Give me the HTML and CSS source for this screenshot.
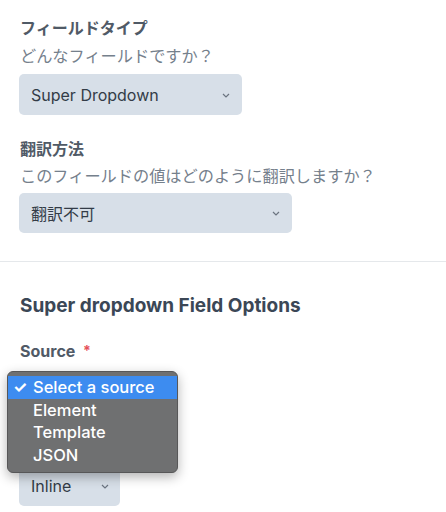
FILE: index.html
```html
<!DOCTYPE html>
<html lang="ja">
<head>
<meta charset="utf-8">
<link rel="stylesheet" href="styles.css">
</head>
<body>
<div class="top">
  <div class="field">
    <div class="label">フィールドタイプ</div>
    <div class="hint">どんなフィールドですか？</div>
    <div class="select w-type"><span>Super Dropdown</span><svg class="chev" width="8" height="5" viewBox="0 0 8 5"><polyline points="1,1 4,4 7,1" fill="none" stroke="#6b7480" stroke-width="1.2"/></svg></div>
  </div>
  <div class="field f2">
    <div class="label">翻訳方法</div>
    <div class="hint h2">このフィールドの値はどのように翻訳しますか？</div>
    <div class="select w-trans"><span>翻訳不可</span><svg class="chev" width="8" height="5" viewBox="0 0 8 5"><polyline points="1,1 4,4 7,1" fill="none" stroke="#6b7480" stroke-width="1.2"/></svg></div>
  </div>
</div>
<hr class="rule">
<div class="options">
  <h2 class="heading">Super dropdown Field Options</h2>
  <div class="field source">
    <div class="label">Source <span class="req">*</span></div>
    <div class="select w-source"><span></span><svg class="chev" width="8" height="5" viewBox="0 0 8 5"><polyline points="1,1 4,4 7,1" fill="none" stroke="#6b7480" stroke-width="1.2"/></svg></div>
    <div class="menu">
      <div class="item active"><span class="check">✓</span>Select a source</div>
      <div class="item">Element</div>
      <div class="item">Template</div>
      <div class="item">JSON</div>
    </div>
  </div>
  <div class="select w-inline"><span>Inline</span><svg class="chev" width="8" height="5" viewBox="0 0 8 5"><polyline points="1,1 4,4 7,1" fill="none" stroke="#6b7480" stroke-width="1.2"/></svg></div>
</div>
</body>
</html>
```

FILE: styles.css
```css
html, body {
  margin: 0;
  padding: 0;
  background: #ffffff;
}
body {
  font-family: "Inter", "Noto Sans CJK JP", sans-serif;
  color: #3f4a57;
  width: 446px;
  height: 512px;
  overflow: hidden;
}
.top {
  padding: 17px 20px 0 19px;
}
.field {
  display: flex;
  flex-direction: column;
  align-items: flex-start;
}
.f2 {
  margin-top: 23px;
}
.label {
  font-size: 16px;
  font-weight: 700;
  line-height: 23px;
  color: #505a66;
  padding-left: 1px;
}
.hint {
  font-size: 16.2px;
  line-height: 23px;
  color: #75808c;
  margin-top: 5px;
  padding-left: 1px;
}
.h2 {
  margin-top: 4px;
}
.select {
  display: flex;
  align-items: center;
  justify-content: space-between;
  box-sizing: border-box;
  height: 41px;
  margin-top: 6px;
  padding: 0 12px 0 12px;
  background: #d7dfe8;
  border-radius: 5px;
  font-size: 16px;
  color: #333c47;
}
.chev {
  display: block;
  margin-top: 1px;
}
.w-type { width: 223px; }
.w-trans { width: 273px; height: 40px; margin-top: 5px; }
.w-source { width: 158px; height: 40px; margin-top: 9px; }
.w-inline { width: 101px; height: 40px; margin-top: 54px; padding-right: 11px; }
.rule {
  margin: 28px 0 0 0;
  border: 0;
  height: 1px;
  background: #e5e8eb;
}
.options {
  padding: 0 20px 0 19px;
}
.heading {
  margin: 32px 0 0 1px;
  font-size: 19px;
  line-height: 24px;
  font-weight: 700;
  color: #3b4756;
}
.source {
  position: relative;
  margin-top: 21px;
}
.req {
  color: #e5505a;
  font-size: 14px;
  margin-left: 4px;
  vertical-align: 1px;
}
.menu {
  position: absolute;
  left: -12px;
  top: 32px;
  width: 171px;
  box-sizing: border-box;
  padding: 4px 0 6px;
  background: #6f7071;
  border: 1px solid #575758;
  border-radius: 6px;
  box-shadow: 0 4px 12px rgba(0, 0, 0, 0.3);
}
.item {
  position: relative;
  height: 22.5px;
  line-height: 22.5px;
  padding-left: 25px;
  font-size: 16.5px;
  font-weight: 500;
  color: #ffffff;
}
.active {
  background: #3d8cf0;
}
.check {
  position: absolute;
  left: 5px;
  top: 0;
  font-size: 16px;
  font-weight: 700;
}
```
